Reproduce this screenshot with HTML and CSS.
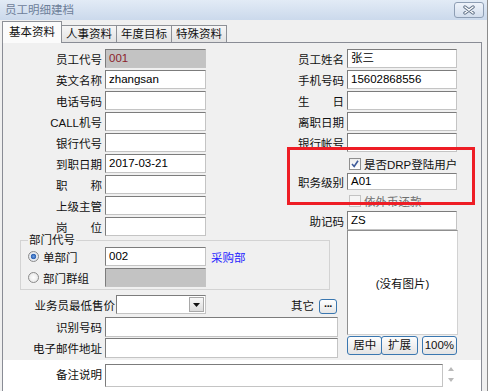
FILE: index.html
```html
<!DOCTYPE html>
<html lang="zh-CN">

<head>
    <meta charset="UTF-8">
    <title>员工明细建档</title>
    <link rel="stylesheet" href="styles.css">
</head>

<body>
    <div id="win">
        <div class="caption">
            <span class="caption-text">员工明细建档</span>
            <a href="javascript:;" class="btn-close">
                <svg width="14" height="10" viewBox="0 0 14 10">
                    <path d="M3 2 L11 8 M11 2 L3 8" stroke="#5f7086" stroke-width="3.4" stroke-linecap="round" fill="none"/>
                    <path d="M3 2 L11 8 M11 2 L3 8" stroke="#fff" stroke-width="1.5" stroke-linecap="round" fill="none"/>
                </svg>
            </a>
        </div>

        <div class="tabs">
            <span class="tab on">基本资料</span>
            <span class="tab">人事资料</span>
            <span class="tab">年度目标</span>
            <span class="tab">特殊资料</span>
        </div>

        <div class="page">
            <div class="form">
                <!-- 左列 -->
                <div class="col-left">
                    <div class="row"><span class="lbl">员工代号</span><span class="edit gray code">001</span></div>
                    <div class="row"><span class="lbl">英文名称</span><span class="edit">zhangsan</span></div>
                    <div class="row"><span class="lbl">电话号码</span><span class="edit"></span></div>
                    <div class="row"><span class="lbl">CALL机号</span><span class="edit"></span></div>
                    <div class="row"><span class="lbl">银行代号</span><span class="edit"></span></div>
                    <div class="row"><span class="lbl">到职日期</span><span class="edit">2017-03-21</span></div>
                    <div class="row"><span class="lbl">职　　称</span><span class="edit"></span></div>
                    <div class="row"><span class="lbl">上级主管</span><span class="edit"></span></div>
                    <div class="row"><span class="lbl">岗　　位</span><span class="edit"></span></div>

                    <fieldset class="group">
                        <legend>部门代号</legend>
                        <div class="row">
                            <span class="opt"><i class="radio on"></i>单部门</span>
                            <span class="edit">002</span>
                            <a href="javascript:;" class="link">采购部</a>
                        </div>
                        <div class="row">
                            <span class="opt"><i class="radio"></i>部门群组</span>
                            <span class="edit gray"></span>
                        </div>
                    </fieldset>

                    <div class="row row-price">
                        <span class="lbl wide">业务员最低售价</span>
                        <span class="combo">
                            <span class="combo-btn">
                                <svg width="7" height="4" viewBox="0 0 7 4"><path d="M0 0 H7 L3.5 4 Z" fill="#111"/></svg>
                            </span>
                        </span>
                        <span class="other">其它</span>
                        <a href="javascript:;" class="btn-more">···</a>
                    </div>
                    <div class="row tall"><span class="lbl">识别号码</span><span class="edit long"></span></div>
                    <div class="row tall"><span class="lbl">电子邮件地址</span><span class="edit long"></span></div>
                </div>

                <!-- 右列 -->
                <div class="col-right">
                    <div class="row"><span class="lbl">员工姓名</span><span class="edit">张三</span></div>
                    <div class="row"><span class="lbl">手机号码</span><span class="edit">15602868556</span></div>
                    <div class="row"><span class="lbl">生　　日</span><span class="edit"></span></div>
                    <div class="row"><span class="lbl">离职日期</span><span class="edit"></span></div>
                    <div class="row"><span class="lbl">银行帐号</span><span class="edit"></span></div>

                    <div class="check-row first">
                        <span class="check on">
                            <svg width="10" height="10" viewBox="0 0 10 10"><path d="M2 5 L4.2 7.5 L8 1.8" stroke="#3d5a9a" stroke-width="1.6" fill="none"/></svg>
                        </span>
                        <span>是否DRP登陆用户</span>
                    </div>
                    <div class="row short"><span class="lbl">职务级别</span><span class="edit">A01</span></div>
                    <div class="check-row off">
                        <span class="check"></span>
                        <span>依外币还款</span>
                    </div>
                    <div class="row"><span class="lbl">助记码</span><span class="edit">ZS</span></div>

                    <div class="photo">(没有图片)</div>
                    <div class="photo-btns">
                        <a href="javascript:;" class="btn b1">居中</a>
                        <a href="javascript:;" class="btn b2">扩展</a>
                        <a href="javascript:;" class="btn b3">100%</a>
                    </div>
                </div>
            </div>

            <div class="memo">
                <span class="lbl">备注说明</span>
                <span class="edit memo-box"></span>
                <span class="spin">
                    <svg width="8" height="20" viewBox="0 0 8 20">
                        <path d="M1 7 L4 3 L7 7 Z" fill="#b9b9b9"/>
                        <path d="M1 14 L7 14 L4 18 Z" fill="#b9b9b9"/>
                    </svg>
                </span>
            </div>
        </div>

        <div class="mark"></div>
    </div>
</body>

</html>
```

FILE: styles.css
```css
* {
    margin: 0;
    padding: 0;
    text-decoration: none;
}

body {
    background: #f0f0f0;
    font-family: "Liberation Sans", "Noto Sans CJK SC", sans-serif;
    font-size: 11.5px;
    color: #111;
}

#win {
    position: relative;
    width: 487px;
    height: 391px;
    border-right: 1px solid #8b8b8b;
    overflow: hidden;
}

/* 标题栏 */
.caption {
    display: flex;
    align-items: center;
    height: 20px;
    padding: 0 3px 0 5px;
    background: linear-gradient(#e2ebf6, #cbd9ec);
}

.caption-text {
    color: #6e8099;
    line-height: 20px;
}

.btn-close {
    margin-left: auto;
    width: 30px;
    height: 16px;
    box-sizing: border-box;
    border: 1px solid #8e9eb4;
    border-radius: 3px;
    background: linear-gradient(#eef3fa, #d3deed);
    display: flex;
    align-items: center;
    justify-content: center;
}

/* 选项卡 */
.tabs {
    display: flex;
    align-items: flex-end;
    height: 22px;
    padding-left: 2px;
}

.tab {
    height: 17px;
    box-sizing: border-box;
    border: 1px solid #8d9096;
    border-bottom: 0;
    padding: 0 4px;
    line-height: 16px;
    background: linear-gradient(#f6f6f6, #e2e2e2);
    margin-left: -1px;
    color: #111;
}

.tab.on {
    position: relative;
    z-index: 2;
    height: 22px;
    margin: 0 0 -1px 0;
    padding: 0 6px;
    line-height: 21px;
    background: #fbfbfb;
}

.page {
    margin-left: 2px;
    width: 480px;
    height: 360px;
    box-sizing: border-box;
    border: 1px solid #898c95;
    background: #f0f0f0;
}

.form {
    display: flex;
    padding: 6px 0 1px;
}

.col-left {
    width: 282px;
}

.col-right {
    width: 172px;
}

.row {
    display: flex;
    align-items: center;
    height: 19px;
    margin-bottom: 2px;
}

.row > * {
    flex: none;
}

.lbl {
    width: 99px;
    margin-right: 3px;
    text-align: right;
    white-space: nowrap;
}

.col-right .lbl {
    width: 59px;
}

.edit {
    width: 101px;
    height: 19px;
    box-sizing: border-box;
    border: 1px solid;
    border-color: #7c7c7c #c4c4c4 #c4c4c4 #7c7c7c;
    background: #fff;
    padding-left: 3px;
    line-height: 17px;
    color: #000;
    white-space: nowrap;
}

.col-right .edit {
    width: 110px;
}

.edit.gray {
    background: #c3c3c3;
}

.edit.code {
    color: #8d1f2b;
}

.edit.long {
    width: 233px;
    height: 20px;
}

/* 部门代号 */
.group {
    margin: -5px 0 0 17px;
    width: 310px;
    box-sizing: border-box;
    border: 1px solid #d3d3d3;
    padding: 0 0 0 7px;
    min-inline-size: auto;
}

.group legend {
    padding: 0 1px;
    line-height: 14px;
}

.opt {
    display: flex;
    align-items: center;
    width: 77px;
}

.radio {
    display: inline-block;
    width: 11px;
    height: 11px;
    box-sizing: border-box;
    border: 1px solid #8a8a8a;
    border-radius: 50%;
    background: radial-gradient(circle, #ffffff 0, #e2e2e2 100%);
    margin-right: 4px;
}

.radio.on {
    background: radial-gradient(circle, #6a9be0 0, #2d62b3 38%, #e7ebf1 48%, #dde1e8 100%);
}

.link {
    margin-left: 5px;
    color: #2424ff;
}

.row-price {
    margin-top: 5px;
}

.lbl.wide {
    width: 112px;
    margin-right: 1px;
}

.combo {
    width: 90px;
    height: 19px;
    box-sizing: border-box;
    border: 1px solid;
    border-color: #7c7c7c #c4c4c4 #c4c4c4 #7c7c7c;
    background: #fff;
    display: flex;
    justify-content: flex-end;
    align-items: center;
    padding-right: 1px;
}

.combo-btn {
    width: 15px;
    height: 15px;
    box-sizing: border-box;
    border: 1px solid #a8a8a8;
    background: linear-gradient(#f8f8f8, #dcdcdc);
    display: flex;
    align-items: center;
    justify-content: center;
}

.other {
    align-self: flex-end;
    margin-left: 85px;
    line-height: 15px;
}

.btn-more {
    align-self: flex-end;
    margin-left: 5px;
    width: 18px;
    height: 15px;
    box-sizing: border-box;
    border: 1px solid #3a77b0;
    border-radius: 3px;
    background: linear-gradient(#ffffff, #e6e6e6);
    color: #111;
    font-size: 11px;
    font-weight: bold;
    line-height: 12px;
    text-align: center;
    letter-spacing: -1px;
}

.row.tall {
    height: 20px;
    margin-bottom: 1px;
}

.row-price + .row.tall {
    margin-top: 3px;
}

/* 右列 */
.check-row {
    display: flex;
    align-items: center;
    height: 17px;
    padding-left: 64px;
    margin-bottom: 1px;
    white-space: nowrap;
}

.check-row > * {
    flex: none;
}

.check-row.first {
    margin-top: 3px;
}

.check-row.off {
    margin-top: 1px;
    margin-bottom: 2px;
    color: #6f6f6f;
}

.check {
    width: 12px;
    height: 12px;
    box-sizing: border-box;
    border: 1px solid #8f8f8f;
    background: linear-gradient(#eeeeee, #ffffff);
    margin-right: 3px;
    display: flex;
    align-items: center;
    justify-content: center;
}

.check-row.off .check {
    border-color: #c3c3c3;
    background: #f5f5f5;
}

.row.short {
    height: 17px;
}

.row.short .edit {
    height: 17px;
    line-height: 15px;
}

.photo {
    margin-left: 62px;
    width: 111px;
    height: 105px;
    box-sizing: border-box;
    border: 1px solid;
    border-color: #8f8f8f #d2d2d2 #d2d2d2 #8f8f8f;
    background: #fff;
    display: flex;
    align-items: center;
    justify-content: center;
    margin-top: -2px;
}

.photo-btns {
    display: flex;
    margin: 1px 0 0 62px;
}

.btn {
    height: 19px;
    box-sizing: border-box;
    border: 1px solid #3a77b0;
    border-radius: 3px;
    background: linear-gradient(#fdfdfd, #e4e4e4);
    color: #111;
    line-height: 17px;
    text-align: center;
}

.b1 {
    width: 36px;
}

.b2 {
    width: 37px;
    margin-left: -1px;
}

.b3 {
    width: 36px;
    margin-left: 4px;
}

/* 备注 */
.memo {
    display: flex;
    height: 40px;
    padding-top: 4px;
    align-items: flex-start;
    background: #fff;
}

.memo .lbl {
    line-height: 23px;
}

.edit.memo-box {
    width: 338px;
    height: 23px;
}

.spin {
    margin-left: 4px;
    display: flex;
}

/* 红框标注 */
.mark {
    position: absolute;
    left: 287px;
    top: 147px;
    width: 188px;
    height: 58px;
    box-sizing: border-box;
    border: 3px solid #ee1d25;
}
```
